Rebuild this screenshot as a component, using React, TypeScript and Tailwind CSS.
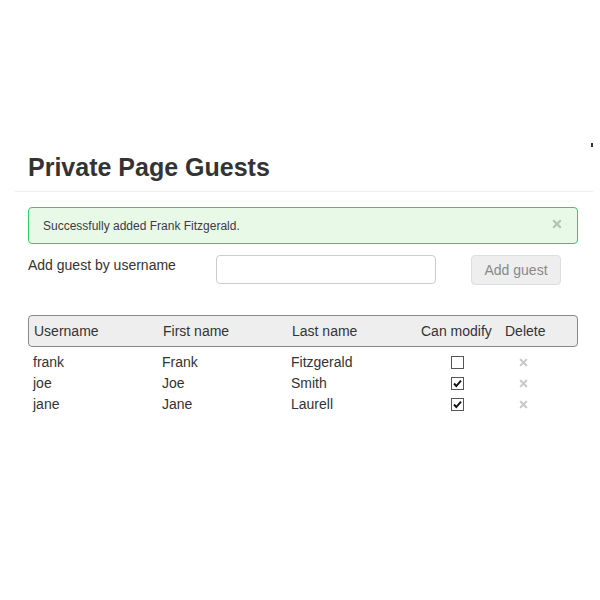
import React from 'react'

interface Guest {
  username: string
  firstName: string
  lastName: string
  canModify: boolean
}

const guests: Guest[] = [
  { username: 'frank', firstName: 'Frank', lastName: 'Fitzgerald', canModify: false },
  { username: 'joe', firstName: 'Joe', lastName: 'Smith', canModify: true },
  { username: 'jane', firstName: 'Jane', lastName: 'Laurell', canModify: true },
]

const cols = 'grid grid-cols-[129px_129px_129px_84px_53px]'

const Times = ({ className }: { className: string }) => (
  <svg viewBox="0 0 10 10" className={className}>
    <path d="M2 2 L8 8 M8 2 L2 8" stroke="currentColor" strokeWidth="2.2" strokeLinecap="square" />
  </svg>
)

const Checkbox = ({ checked }: { checked: boolean }) => (
  <span className="flex h-[13px] w-[13px] items-center justify-center border border-[#555] bg-white">
    {checked && (
      <svg viewBox="0 0 11 11" className="h-[11px] w-[11px]">
        <path d="M2 5.5 L4.3 8 L9 2.6" fill="none" stroke="#111" strokeWidth="1.9" />
      </svg>
    )}
  </span>
)

export default function App() {
  return (
    <div className="min-h-[600px] bg-white font-['Liberation_Sans',Arial,sans-serif] text-[#333]">
      <div className="relative ml-[15px] w-[578px] pt-[150px]">
        {/* stray mark at the right edge */}
        <span className="absolute right-[0px] top-[143px] h-[4px] w-[2px] bg-[#333]" />

        <div className="border-b border-[#eee] pb-[7px] pl-[13px]">
          <h1 className="text-[25px] font-bold leading-[34px] text-[#333]">Private Page Guests</h1>
        </div>

        <div className="ml-[13px] mt-[15px] flex h-[37px] w-[550px] items-center justify-between rounded-[4px] border border-[#2fcc6a] bg-[#e8f9e8] pl-[14px] pr-[15px]">
          <span className="text-[12px] text-[#3a3a48]">Successfully added Frank Fitzgerald.</span>
          <Times className="mb-[3px] h-[10px] w-[10px] text-[#b4c2b4]" />
        </div>

        <div className="ml-[13px] mt-[11px] flex items-start">
          <label className="w-[188px] text-[14px] leading-[20px]">Add guest by username</label>
          <input
            type="text"
            className="h-[29px] w-[220px] rounded-[4px] border border-[#ccc] bg-white"
          />
          <button className="ml-[35px] h-[30px] w-[90px] rounded-[4px] border border-[#ddd] bg-[#eee] text-[14px] text-[#888]">
            Add guest
          </button>
        </div>

        <div className="ml-[13px] mt-[30px] w-[550px]">
          <div className={`${cols} h-[32px] items-center rounded-[4px] border border-[#888] bg-[#eee] text-[14px]`}>
            <span className="pl-[5px]">Username</span>
            <span className="pl-[5px]">First name</span>
            <span className="pl-[5px]">Last name</span>
            <span className="pl-[5px]">Can modify</span>
            <span className="pl-[5px]">Delete</span>
          </div>
          <div className="mt-[5px]">
            {guests.map((g) => (
              <div key={g.username} className={`${cols} h-[21px] items-center text-[14px]`}>
                <span className="pl-[5px]">{g.username}</span>
                <span className="pl-[5px]">{g.firstName}</span>
                <span className="pl-[5px]">{g.lastName}</span>
                <span className="flex justify-center pl-[1px]">
                  <Checkbox checked={g.canModify} />
                </span>
                <span className="flex justify-center pr-[4px]">
                  <Times className="h-[9px] w-[9px] text-[#c8c8c8]" />
                </span>
              </div>
            ))}
          </div>
        </div>
      </div>
    </div>
  )
}
